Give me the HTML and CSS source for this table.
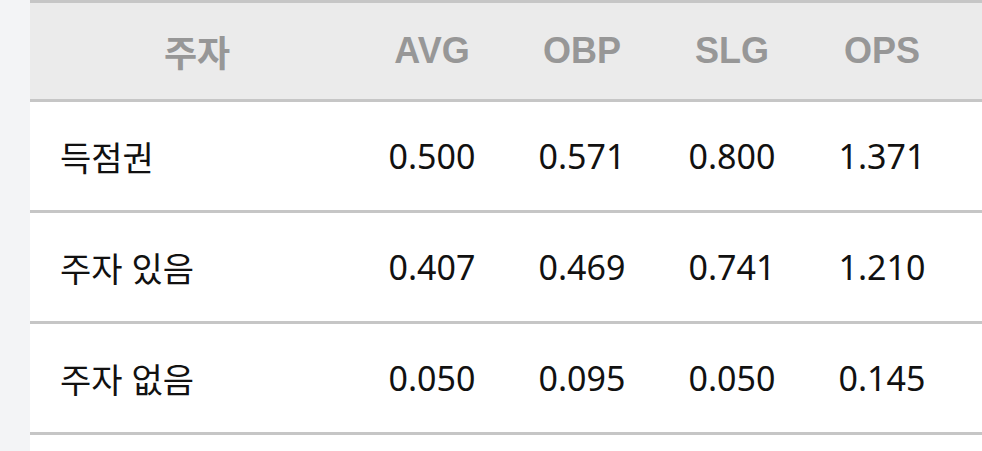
FILE: index.html
```html
<!DOCTYPE html>
<html lang="ko">
<head>
<meta charset="utf-8">
<link rel="stylesheet" href="styles.css">
</head>
<body>
<div class="page">
  <div class="side"></div>
  <div class="table">
    <div class="row head">
      <div class="cell name-h">주자</div>
      <div class="cell">AVG</div>
      <div class="cell">OBP</div>
      <div class="cell">SLG</div>
      <div class="cell">OPS</div>
      <div class="cell"></div>
    </div>
    <div class="row">
      <div class="cell name">득점권</div>
      <div class="cell">0.500</div>
      <div class="cell">0.571</div>
      <div class="cell">0.800</div>
      <div class="cell">1.371</div>
      <div class="cell"></div>
    </div>
    <div class="row">
      <div class="cell name">주자 있음</div>
      <div class="cell">0.407</div>
      <div class="cell">0.469</div>
      <div class="cell">0.741</div>
      <div class="cell">1.210</div>
      <div class="cell"></div>
    </div>
    <div class="row">
      <div class="cell name">주자 없음</div>
      <div class="cell">0.050</div>
      <div class="cell">0.095</div>
      <div class="cell">0.050</div>
      <div class="cell">0.145</div>
      <div class="cell"></div>
    </div>
  </div>
</div>
</body>
</html>
```

FILE: styles.css
```css
html, body {
  margin: 0;
  padding: 0;
  background: #ffffff;
}
.page {
  display: flex;
  width: 982px;
  height: 451px;
  overflow: hidden;
}
.side {
  width: 30px;
  flex: none;
  background: #f3f4f6;
}
.table {
  flex: 1;
  display: flex;
  flex-direction: column;
}
.row {
  display: grid;
  grid-template-columns: 327px 150px 150px 150px 150px 1fr;
  height: 108px;
  border-bottom: 3px solid #c6c6c6;
  font-family: "Noto Sans", "Noto Sans CJK KR", sans-serif;
  font-size: 34px;
  color: #111111;
}
.row.head {
  height: 96px;
  border-top: 3px solid #c6c6c6;
  background: #ebebeb;
  font-family: "Liberation Sans", "Noto Sans CJK KR", sans-serif;
  font-size: 36px;
  font-weight: 700;
  color: #979797;
}
.cell {
  display: flex;
  align-items: center;
  justify-content: center;
}
.name-h {
  padding-left: 7px;
}
.name {
  justify-content: flex-start;
  padding-left: 30px;
}
```
